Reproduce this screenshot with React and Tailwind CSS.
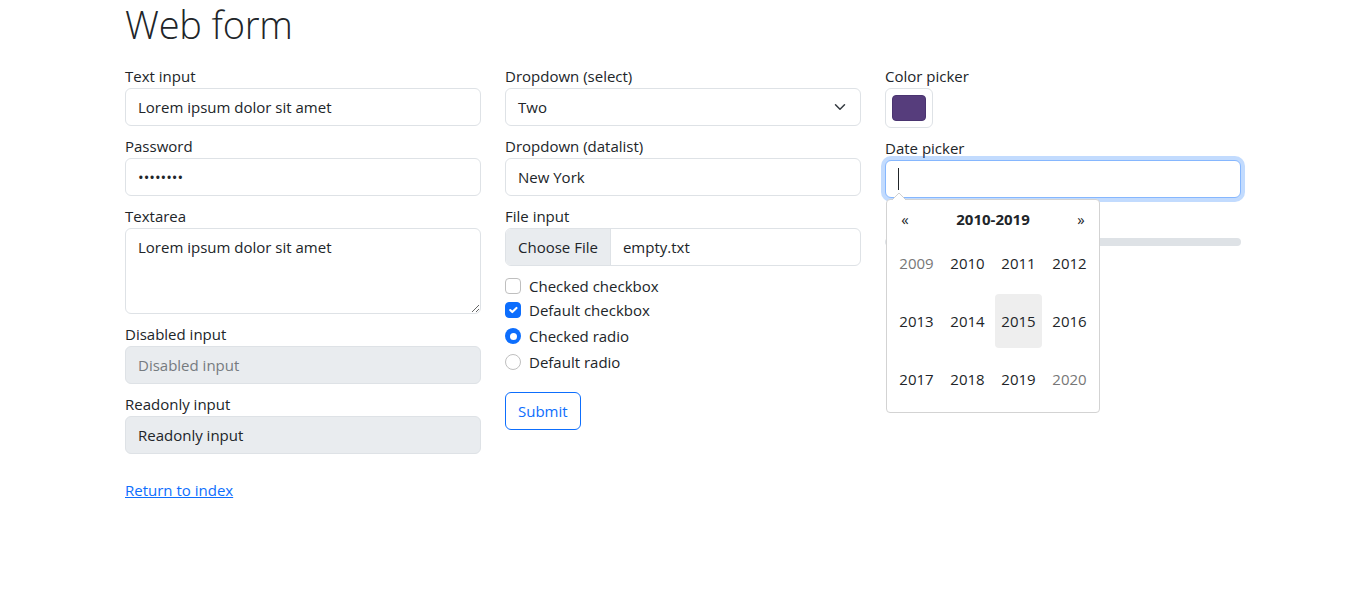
const Label = ({ children }) => (
  <div className="block leading-6">{children}</div>
);

const boxCls =
  "h-[38px] w-full rounded-md border border-[#dee2e6] px-3 flex items-center leading-6";

const Check = ({ checked }) =>
  checked ? (
    <span className="w-4 h-4 rounded-[4px] bg-[#0d6efd] border border-[#0d6efd] flex items-center justify-center">
      <svg viewBox="0 0 20 20" className="w-4 h-4">
        <path
          d="m6 10 3 3 6-6"
          fill="none"
          stroke="#fff"
          strokeWidth="3"
          strokeLinecap="round"
          strokeLinejoin="round"
        />
      </svg>
    </span>
  ) : (
    <span className="w-4 h-4 rounded-[4px] border border-[#bfbfbf] bg-white" />
  );

const Radio = ({ checked }) =>
  checked ? (
    <span className="w-4 h-4 rounded-full bg-[#0d6efd] flex items-center justify-center">
      <span className="w-[7px] h-[7px] rounded-full bg-white" />
    </span>
  ) : (
    <span className="w-4 h-4 rounded-full border border-[#bfbfbf] bg-white" />
  );

const years = [
  ["2009", true],
  ["2010"],
  ["2011"],
  ["2012"],
  ["2013"],
  ["2014"],
  ["2015", false, true],
  ["2016"],
  ["2017"],
  ["2018"],
  ["2019"],
  ["2020", true],
];

const DatePopup = () => (
  <div className="absolute left-px top-[39px] w-[214px] z-10">
    <svg
      width="16"
      height="8"
      viewBox="0 0 16 8"
      className="absolute left-[6px] -top-[7px]"
    >
      <path d="M0 8 L7 1 L14 8 Z" fill="#fff" />
      <path d="M0 8 L7 1 L14 8" fill="none" stroke="#d0d0d0" />
    </svg>
    <div className="rounded-[4px] border border-[#d3d3d3] bg-white p-1">
      <div className="grid grid-cols-[28px_1fr_28px] items-center h-[30px] leading-5">
        <span className="text-center text-[15px]">«</span>
        <span className="text-center font-bold">2010-2019</span>
        <span className="text-center text-[15px]">»</span>
      </div>
      <div className="grid grid-cols-4">
        {years.map(([y, muted, active]) => (
          <div
            key={y}
            className={
              "h-[54px] m-[2px] rounded-[4px] flex items-center justify-center " +
              (muted ? "text-[#777] " : "") +
              (active ? "bg-[#eeeeee]" : "")
            }
          >
            {y}
          </div>
        ))}
      </div>
    </div>
  </div>
);

export default function App() {
  return (
    <div className="font-['Open_Sans',sans-serif] text-[15px] text-[#212529] bg-white min-h-[589px]">
      <div className="mx-auto w-[1116px]">
        <h1 className="text-[38px] font-light leading-[48px] tracking-[-0.2px]">
          Web form
        </h1>
        <div className="grid grid-cols-3 gap-x-6 mt-4">
          {/* column 1 */}
          <div className="flex flex-col gap-2">
            <div>
              <Label>Text input</Label>
              <div className={boxCls + " bg-white"}>Lorem ipsum dolor sit amet</div>
            </div>
            <div>
              <Label>Password</Label>
              <input
                type="password"
                readOnly
                defaultValue="12345678"
                className={boxCls + " bg-white outline-none"}
              />
            </div>
            <div>
              <Label>Textarea</Label>
              <textarea
                readOnly
                defaultValue="Lorem ipsum dolor sit amet"
                className="block w-full h-[86px] rounded-md border border-[#dee2e6] px-3 py-[6px] leading-6 outline-none"
              />
            </div>
            <div>
              <Label>Disabled input</Label>
              <div className={boxCls + " bg-[#e9ecef] text-[#767b80]"}>
                Disabled input
              </div>
            </div>
            <div>
              <Label>Readonly input</Label>
              <div className={boxCls + " bg-[#e9ecef]"}>Readonly input</div>
            </div>
          </div>

          {/* column 2 */}
          <div className="flex flex-col">
            <div>
              <Label>Dropdown (select)</Label>
              <div className={boxCls + " bg-white justify-between"}>
                <span>Two</span>
                <svg viewBox="0 0 16 16" className="w-3 h-3 mr-[2px]">
                  <path
                    d="m2 5 6 6 6-6"
                    fill="none"
                    stroke="#343a40"
                    strokeWidth="2"
                    strokeLinecap="round"
                    strokeLinejoin="round"
                  />
                </svg>
              </div>
            </div>
            <div className="mt-2">
              <Label>Dropdown (datalist)</Label>
              <div className={boxCls + " bg-white"}>New York</div>
            </div>
            <div className="mt-2">
              <Label>File input</Label>
              <div className="h-[38px] rounded-md border border-[#dee2e6] flex items-stretch overflow-hidden">
                <div className="bg-[#e9ecef] px-3 flex items-center border-r border-[#dee2e6]">
                  Choose File
                </div>
                <div className="px-3 flex items-center">empty.txt</div>
              </div>
            </div>
            <div className="mt-2 flex items-center gap-2 h-6">
              <Check />
              <span>Checked checkbox</span>
            </div>
            <div className="flex items-center gap-2 h-6">
              <Check checked />
              <span>Default checkbox</span>
            </div>
            <div className="mt-[2px] flex items-center gap-2 h-6">
              <Radio checked />
              <span>Checked radio</span>
            </div>
            <div className="mt-[2px] flex items-center gap-2 h-6">
              <Radio />
              <span>Default radio</span>
            </div>
            <div className="mt-[18px]">
              <button className="h-[38px] px-3 rounded-md border border-[#0d6efd] text-[#0d6efd] leading-6">
                Submit
              </button>
            </div>
          </div>

          {/* column 3 */}
          <div className="flex flex-col">
            <div>
              <Label>Color picker</Label>
              <div className="w-12 h-10 rounded-md border border-[#dee2e6] p-[6px]">
                <div className="w-full h-full rounded-[4px] bg-[#563d7c] border border-[#4a3470]" />
              </div>
            </div>
            <div className="mt-2 relative">
              <Label>Date picker</Label>
              <div className="relative">
                <div className="h-[38px] rounded-md border border-[#86b7fe] shadow-[0_0_0_4px_rgba(13,110,253,0.25)] bg-white px-3 flex items-center">
                  <span className="w-px h-[22px] bg-[#212529]" />
                </div>
                <DatePopup />
              </div>
            </div>
            {/* range (label sits under the open date popup) */}
            <div className="mt-2">
              <div className="h-6" />
              <div className="h-6 flex items-center">
                <div className="w-full h-2 rounded-full bg-[#dee2e6]" />
              </div>
            </div>
          </div>
        </div>
        <div className="mt-6 leading-6">
          <a href="#" className="text-[#0d6efd] underline">
            Return to index
          </a>
        </div>
      </div>
    </div>
  );
}
